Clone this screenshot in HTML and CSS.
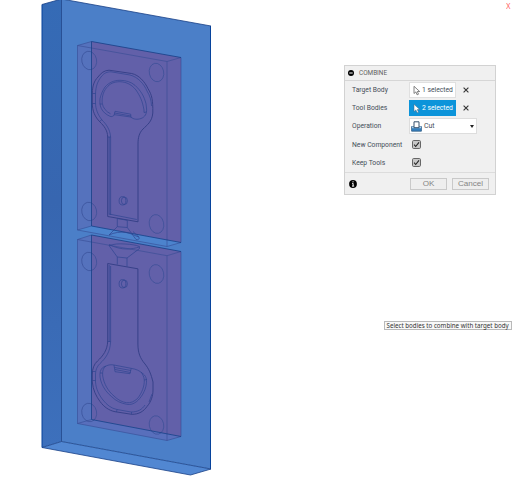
FILE: index.html
```html
<!DOCTYPE html>
<html lang="en">
<head>
<meta charset="utf-8">
<title>Combine</title>
<link rel="stylesheet" href="styles.css">
</head>
<body>
<main class="viewport">
  <svg class="model" width="220" height="478" viewBox="0 0 220 478">
    <defs>
      <linearGradient id="side" x1="0" y1="0" x2="0" y2="1"><stop offset="0" stop-color="#356bb6"/><stop offset=".45" stop-color="#3766b0"/><stop offset="1" stop-color="#3d70bc"/></linearGradient>
    </defs>
    <path fill="#4b7fc8" d="M61.5-1 211 26V469L61.5 441.5Z"/>
    <path fill="url(#side)" d="M42 4.5 61.5-1V441.5L42 447.5Z"/>
    <path fill="#5187d2" d="M42 447.5 61.5 441.5 211 469 190.5 475Z"/>
    <path class="edge strong" d="M210.5 26V469M42 4.5V447.5"/>
    <path class="edge" d="M42 4.5 61.5-1 211 26M211 469 190.5 475 42 447.5M61.5-1V441.5L42 447.5M61.5 441.5 211 469"/>

    <path fill="#5572bd" d="M77.5 45.5 91.5 41.5V226L77.5 230Z"/>
    <path fill="#6260a9" d="M91.5 41.5 181 57.5V242.5L91.5 226Z"/>
    <path fill="#4c83cd" d="M77.5 230 91.5 226 181 242.5 167 246.5Z"/>
    <path fill="#5572bd" d="M77.5 239.5 91.5 235V419.5L77.5 423.5Z"/>
    <path fill="#6260a9" d="M91.5 235 181 251.5V436.5L91.5 419.5Z"/>
    <path fill="#586fbc" d="M77.5 423.5 91.5 419.5 181 436.5 167 440.5Z"/>

    <g class="thin">
      <path d="M77.5 45.5 167 61.5 181 57.5M167 61.5V246.5M77.5 45.5V230M181 57.5V242.5"/>
      <path d="M77.5 45.5 91.5 41.5M91.5 226 77.5 230 167 246.5 181 242.5"/>
      <path d="M77.5 423.5V239.5L167 255.7 181 251.5V436.5L167 440.5 77.5 423.5 91.5 419.5M167 255.7V440.5M77.5 239.5 91.5 235"/>
      <ellipse cx="89.2" cy="60.5" rx="7.4" ry="9.3" transform="rotate(-12 89.2 60.5)"/>
      <ellipse cx="156.5" cy="72.5" rx="7.2" ry="9.3" transform="rotate(-12 156.5 72.5)"/>
      <ellipse cx="89.2" cy="211.5" rx="7.4" ry="9.3" transform="rotate(-12 89.2 211.5)"/>
      <ellipse cx="156.5" cy="224" rx="7.2" ry="9.5" transform="rotate(-12 156.5 224)"/>
      <ellipse cx="89.2" cy="261.5" rx="7.4" ry="9.3" transform="rotate(-12 89.2 261.5)"/>
      <ellipse cx="156.5" cy="274" rx="7.2" ry="9.5" transform="rotate(-12 156.5 274)"/>
      <ellipse cx="89.2" cy="412.5" rx="7.4" ry="9.3" transform="rotate(-12 89.2 412.5)"/>
      <ellipse cx="156.5" cy="425" rx="7.2" ry="9.3" transform="rotate(-12 156.5 425)"/>
    </g>
    <path class="edge" d="M91.5 226V41.5L181 57.5M91.5 226 181 242.5M91.5 419.5V235L181 251.5M91.5 419.5 181 436.5"/>

    <g class="outline">
      <path d="M107.7 216.5V137C107.5 130 104 126 100 122C95 117 92.3 111 92.3 103V93C92.5 86 94 81 98 77C101 73 104 70.5 109 70.2L131.7 73.5C139 75 145 82 148 88.7C152 95 153 100 152.8 113C152 122 147 125 143 129C139 133 138 138 138 144V221.8L107.7 216.5"/>
      <path d="M107.7 263.5V341C107.5 350 103 356 97.5 361C94 364 92.3 369 92.3 374V382C93 390 96 396 100 401.5C104 407 109 410.5 115 411.7L131.7 414.3C139 414.5 144 411 147 406.5C151 402 153 396 153 390V382C151 374 149 369 145 364C140 358 138 353 137.9 344V268.8Z"/>
    </g>
    <g class="thin detail">
      <path d="M110.6 215V137C110 129 106 124 102 120C98 115 95.5 109 95.5 103V94C95.7 86 98 81 101 77C104 73 107 71.8 111 71.8L130 75C138 77 144 84 147 91C150 96 151.3 100 151.5 106M109 214 136.8 219.5M109.2 137V214.5M107.7 137H110.6M92.3 93.5H95.5M92.3 103.5H95.5M99.5 121.5 102 119.5"/>
      <path d="M110.6 266V342C110 352 106 358 100 363.5C97 366.5 95.5 370 95.5 374V382C96 389 99 395 103 400C107 405 111 408.3 117 409.5L131 412C138 412 142 409.5 145 405M109.2 265V342M107.7 341.5H110.6M92.3 371.5H95.5M92.3 380.5H95.5M117 409.5 116.5 412M131.5 412V414.3M149 402 152 394"/>
      <path d="M100 98.7C101 94 103 90 105 87C109 82.5 114 80.3 120 80.3C126 80.3 131 82 135 85.3C141 91 144 96 146 103.7L146.6 109C146.8 114 145 117 141 118.5C137 119.8 134 119.5 130.7 117L114.5 114.7C113 116.5 111.5 117 110 116.3C106 114.5 103 112 101.3 108.5C99.7 105 99.8 102 100 98.7Z"/>
      <path d="M110.5 113.8C106 111.5 103 108 102.2 103C101.7 98 103 92 106.5 87.8C110 83.5 114 81.7 120 81.7C127 82 132 85 136 90C140 96 142.5 101 144 110V112.5M115 111.3 130.7 114.2M114.5 113 131 116M115 111.3 114 115.5M130.7 114.2 131 117.5M99.8 104H102M144 112.5 146.5 112"/>
      <path d="M114 365L131 368.3C136 369 140 371 142 373C146 375.5 147 379 146.3 384C145.5 391 141 398 136.7 401.5C133.5 404 130.5 405 126.7 404.3C121 403.3 116 401 111.7 396.7C107 393 103.5 388 101.7 383.3C100 379 99.5 375 100.3 371.5C101.5 368 103 367 106 366C109 364.7 111 364.5 114 365Z"/>
      <path d="M106 366C103 368 102.3 371 102.7 376C104 384 108 391 114 396C118 400 122 402 126.5 402.7C131 403.2 134 401.5 137.5 398.5C142 393 144.5 386 144.3 380C144 376.5 142.5 374 141 372M114 365 115 371.7 130 373.7 131.2 368.3M114.5 367.5 131 370.5M115 369.5 130.5 372.5M100 373H102.5M144.3 380 147 379.5"/>
      <ellipse cx="122.5" cy="200.8" rx="3.4" ry="4.2"/>
      <ellipse cx="124.4" cy="200.8" rx="3" ry="3.8"/>
      <ellipse cx="122.5" cy="283.8" rx="3.4" ry="4.2"/>
      <ellipse cx="124.4" cy="283.8" rx="3" ry="3.8"/>
      <path d="M117.3 218.5V226.7L109 235C114 232.5 121 231.5 126 232.5C132 233.5 135 236 139 237M117.3 218.5 127.3 220.3V227.5L136 239.5C138 240.3 139.5 239 139.2 237.5L133 231.5M117.3 226.7 127.3 227.5"/>
      <path d="M109 245.5C114 244 119 243.5 125 244C131 244.3 136 245 139.5 246.5V248.5L127 258V266.5M109 245.5 117.3 257V264.5M117.3 257 127 258M109 244.5C115 247.5 121 249 127 249C132 249 136 248 139 247"/>
    </g>
  </svg>

  <span class="corner">X</span>

  <section class="dialog">
    <header class="title">
      <svg width="6" height="6" viewBox="0 0 6 6"><circle cx="3" cy="3" r="3"/><path d="M1.3 3H4.7" stroke="#fff"/></svg>
      <span>COMBINE</span>
    </header>
    <div class="rows">
      <div class="row">
        <span class="label">Target Body</span>
        <span class="pick"><svg width="8" height="11" viewBox="0 0 8 10"><path d="M1 .8V8L2.9 6.4 4.1 9.3 5.5 8.7 4.3 6H6.7Z" fill="#fff" stroke="#666" stroke-width=".8"/></svg><span>1 selected</span></span>
        <svg class="clear" width="6" height="6" viewBox="0 0 6 6"><path d="M.6.6 5.4 5.4M5.4.6.6 5.4"/></svg>
      </div>
      <div class="row">
        <span class="label">Tool Bodies</span>
        <span class="pick active"><svg width="8" height="11" viewBox="0 0 8 10"><path d="M1 .8V8L2.9 6.4 4.1 9.3 5.5 8.7 4.3 6H6.7Z" fill="#fff" stroke="#45647c" stroke-width=".5"/></svg><span>2 selected</span></span>
        <svg class="clear" width="6" height="6" viewBox="0 0 6 6"><path d="M.6.6 5.4 5.4M5.4.6.6 5.4"/></svg>
      </div>
      <div class="row">
        <span class="label">Operation</span>
        <span class="select"><svg width="11" height="11" viewBox="0 0 11 11"><path d="M.6 5.5H10.4V10.2H.6Z" fill="#347fbe" stroke="#315d86" stroke-width=".8"/><path d="M1 5.5H10V7.2H1Z" fill="#a9cee9"/><path d="M3 .8H8V6.7H3Z" fill="#fff" stroke="#36526e"/></svg><span>Cut</span><i class="arrow"></i></span>
      </div>
      <div class="row">
        <span class="label">New Component</span>
        <svg class="check" width="9" height="9" viewBox="0 0 9 9"><rect x=".5" y=".5" width="8" height="8" rx="1.2"/><path d="M2.1 4.7 3.7 6.5 7 2.3"/></svg>
      </div>
      <div class="row">
        <span class="label">Keep Tools</span>
        <svg class="check" width="9" height="9" viewBox="0 0 9 9"><rect x=".5" y=".5" width="8" height="8" rx="1.2"/><path d="M2.1 4.7 3.7 6.5 7 2.3"/></svg>
      </div>
    </div>
    <footer class="actions">
      <svg class="info" width="8" height="8" viewBox="0 0 8 8"><circle cx="4" cy="4" r="3.9"/><path d="M3.1 3.4H4.1V6M3 6.1H5.2M3.5 1.8H4.6" fill="none" stroke="#fff"/></svg>
      <button class="ok">OK</button>
      <button class="cancel">Cancel</button>
    </footer>
  </section>

  <div class="hint">Select bodies to combine with target body</div>
</main>
</body>
</html>
```

FILE: styles.css
```css
* { box-sizing: border-box; }
body { margin: 0; background: #fff; font-family: "Liberation Sans", Arial, sans-serif; }
.viewport { position: relative; width: 512px; height: 478px; overflow: hidden; }
.model { display: block; }
.model path, .model ellipse { stroke-linejoin: round; }
.edge, .thin, .outline { fill: none; stroke: #173f87; stroke-width: .8; }
.strong { stroke: #07439c; stroke-width: 1; }
.thin { stroke: #354b94; stroke-width: .6; }
.detail { stroke: #2f4590; stroke-width: .7; }
.outline { stroke: #353f87; stroke-width: .95; }

.corner { position: absolute; left: 506px; top: 1px; font-size: 8.5px; line-height: 11px; color: #ff6262; transform: scaleX(.8); transform-origin: left; }

.dialog { position: absolute; left: 344px; top: 65px; width: 152px; height: 130px; display: flex; flex-direction: column; background: #f0f0f0; border: 1px solid #d2d2d2; color: #444d59; font: 6.75px Roboto, "Liberation Sans", sans-serif; }
.title { display: flex; align-items: center; gap: 5px; height: 15px; padding-left: 3px; border-bottom: 1px solid #d6d6d6; color: #5e5e5e; font-size: 6.4px; }
.rows { display: flex; flex-direction: column; height: 91px; }
.row { display: flex; align-items: center; height: 18.2px; padding-left: 7px; }
.label { width: 57px; white-space: nowrap; }
.pick { display: flex; align-items: center; width: 47px; height: 16px; padding-left: 3px; gap: 1px; background: #fff; border: 1px solid #e0e0e0; font-size: 6.75px; white-space: nowrap; }
.pick svg { flex: none; }
.active { background: #0c94da; border-color: #0c94da; color: #fff; }
.clear { margin-left: 7px; fill: none; stroke: #333; stroke-width: 1.1; }
.select { display: flex; align-items: center; width: 68px; height: 16px; padding: 0 2px 0 1px; gap: 2px; background: #fff; border: 1px solid #ddd; font-size: 6.9px; }
.arrow { margin-left: auto; border: 2px solid transparent; border-top: 3px solid #222; border-bottom: 0; }
.check { margin-left: 3px; fill: #c8c8c8; stroke: #666; }
.check path { fill: none; stroke: #222; stroke-width: 1.1; }
.actions { display: flex; align-items: center; height: 22px; padding: 1px 6px 0 4px; border-top: 1px solid #dcdcdc; }
button { height: 12px; padding: 0; border: 1px solid #c9c9c9; background: #eee; color: #858585; font: 8.1px/10px "Liberation Sans", Arial, sans-serif; }
.ok { width: 37px; margin-left: auto; }
.cancel { width: 37px; margin-left: 5px; }

.hint { position: absolute; left: 384px; top: 321px; width: 128px; height: 9px; padding-left: 1.5px; background: #f8f8f8; border: 1px solid #b9b9b9; color: #333; font: 6.2px/8px "Noto Sans", sans-serif; white-space: nowrap; }
```
